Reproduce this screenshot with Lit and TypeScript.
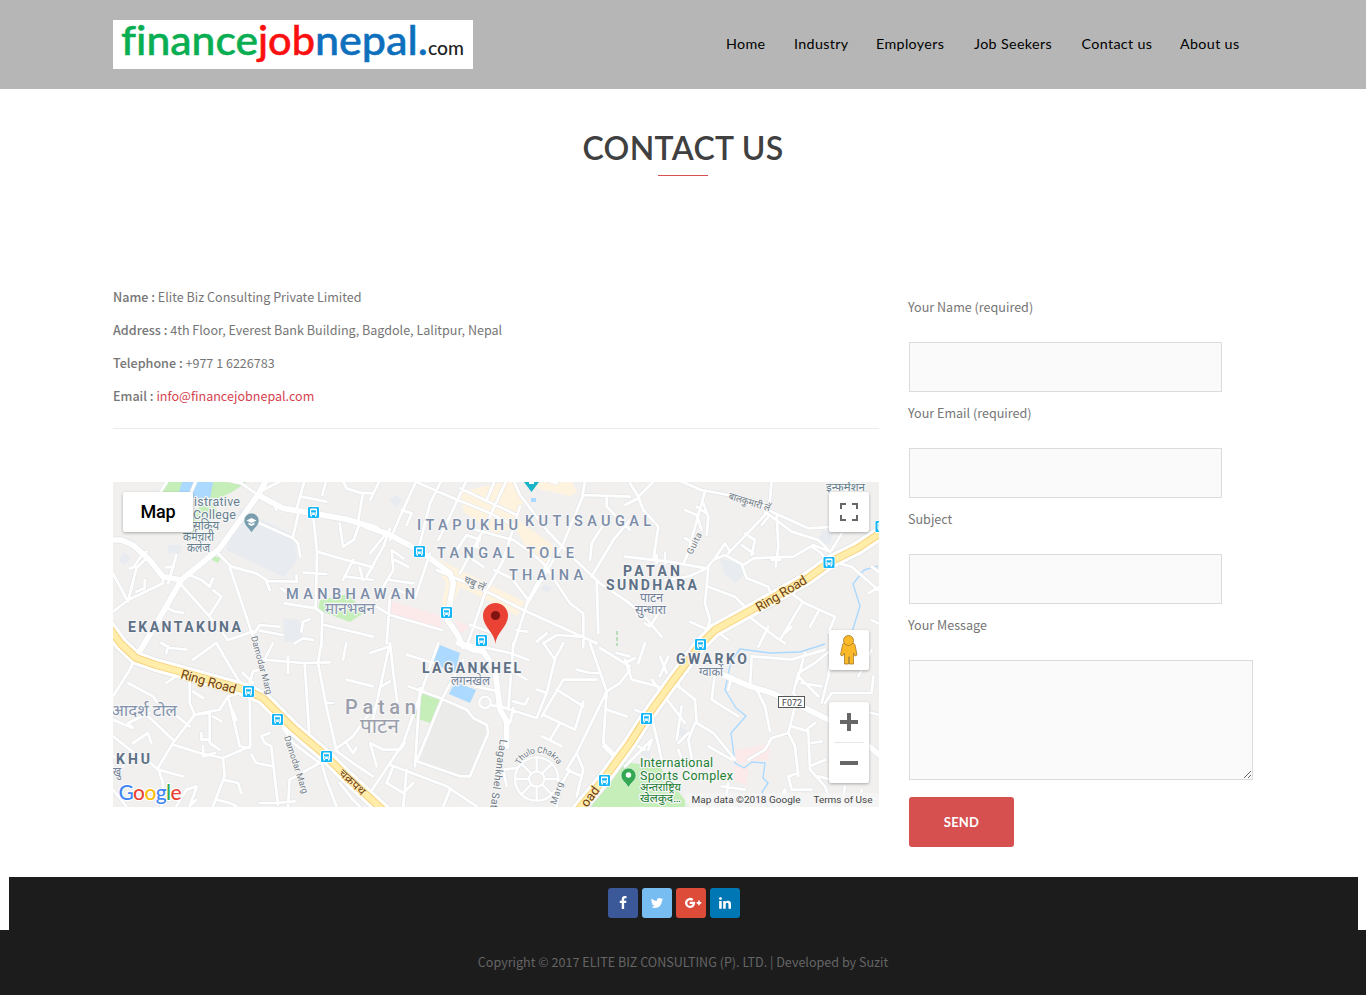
import { LitElement, html, css, svg } from "lit";
import { customElement } from "lit/decorators.js";

interface Tile {
  x: number;
  y: number;
  minor: string;
  mid: string;
}

/* Street geometry, one entry per map tile; tile units are a third of a pixel. */
const TILES: Tile[] = [
  {
    x: 113,
    y: 480,
    mid: "M70 530L125 440L205 300L320 205L435 45L460 0M435 45L510 85L600 100L700 118L790 145M-5 180L25 180L60 195L110 240L150 290L205 300",
    minor:
      "M250 0L235 36M165 0L140 40M435 45L385 10L340 0M450 30L510 0M575 0L550 90M565 50L640 65M640 0L628 45M780 40L740 38L700 25L690 0M750 40L735 125M490 90L485 70M600 105L612 215L608 385L628 400L625 500M612 215L700 240L780 262M720 240L690 300M740 130L722 180L690 200M680 130L690 200M440 130L540 175L555 190L562 230M555 105L540 170M572 278L640 282M550 285L552 305L465 303L430 280L355 260L310 215M350 262L380 350L420 470L430 495M460 303L470 330M205 315L290 410L345 480L420 455M230 285L265 300L290 320L300 295M300 330L325 350L290 405M150 300L150 310L45 360L0 395M0 280L45 365L70 265L95 240M50 265L62 262L80 235L100 215M95 300L95 325L70 335M165 385L185 395L210 398M165 310L180 260L190 225M160 262L182 260M515 370L610 385M505 325L540 350M425 458L440 435L500 440M440 452L510 465M565 455L570 425L590 418M545 490L570 475L600 480M635 435L780 470M700 290L780 300M740 262L750 300",
  },
  {
    x: 370,
    y: 480,
    mid: "M-10 140L50 160L150 212L200 250L240 280L250 310L232 420L260 460L280 500",
    minor:
      "M140 0L90 110L60 180M95 90L125 100L110 135M125 0L240 50L350 95L430 135M215 0L180 70L145 210M290 0L230 130L205 180M350 60L375 0M410 0L350 130L270 280M320 150L430 180L480 215L520 250L600 370L640 400L640 500M270 25L440 105M430 0L450 45L530 150L600 225L690 310L780 370M450 80L400 240L345 340L290 500M530 0L560 10M645 0L638 45L780 50M640 45L580 190L470 375L430 500M710 50L710 80L780 150M780 120L730 180L665 290M660 240L665 190L690 150L720 110M200 270L340 330L460 390L680 490M372 270L425 295L475 360M250 225L290 165L330 180M310 240L340 260M-10 290L40 200L60 145M20 360L40 320L70 270L65 210L100 235M75 240L115 260M180 220L135 355L75 325L60 350L50 490M60 300L130 310M20 380L60 405L215 450M300 435L370 460M520 490L560 465L630 470M500 485L530 460M680 300L685 460M540 235L470 370M0 220L45 165M440 450L470 455M330 170L320 200L340 215M0 60L30 0",
  },
  {
    x: 625,
    y: 480,
    mid: "",
    minor:
      "M230 30L310 45L400 65L440 95L550 145L630 140M160 0L240 35L185 230L175 250M40 50L90 0M40 55L0 75M15 10L40 50L55 90L100 140L85 240M180 90L215 105L230 150M235 70L250 110L245 165M215 80L245 100M180 175L210 190M0 230L130 245L245 265L265 240L300 225L355 255L385 235L505 230L565 195L615 215M440 0L435 60L420 105L310 220M420 95L500 155L580 180L610 210M455 105L460 200L452 260M360 160L390 180L380 225M430 110L410 135M440 240L465 240M620 210L650 160M350 255L365 295L430 320L435 335M250 265L240 370L255 420L240 470M120 300L190 290L245 265M250 320L330 350L360 380M270 235L300 190L315 215M350 195L385 220M560 200L590 220L600 240L680 260L760 330M680 0L650 60M500 340L540 370L630 410L610 460M530 370L465 480M580 395L555 440M360 400L450 470L480 490M290 465L310 480M195 425L250 450M430 440L400 500M95 225L95 250M120 220L120 250M0 360L50 400L110 470M60 430L75 440L100 400M740 260L780 290M480 460L500 440M730 340L780 310M740 420L780 440",
  },
  {
    x: 113,
    y: 643,
    mid: "",
    minor:
      "M70 40L50 80L0 160M45 120L120 160L130 175L180 210L230 250M145 0L170 15L220 20M165 10L160 30M310 0L240 50M310 0L345 60L375 110L400 135M160 120L195 95L230 105L230 180L245 215L180 300L135 375L150 420L145 490M240 145L270 165M245 215L320 200L345 160L400 145M345 160L360 220L380 310L410 315M410 160L412 310L330 345L335 400L300 490M350 185L370 230M245 215L290 210L290 300L320 320M300 220L325 235M265 270L265 290L290 290M0 230L60 255L45 240L110 210M105 220L180 290M60 300L105 270L115 300M0 280L50 320L90 350M35 330L30 370M90 340L135 380L210 400M180 305L260 330L330 345M270 310L270 340L305 330M390 90L420 120M410 120L420 85L440 80L480 0M450 50L570 60L650 58M525 40L525 90M575 60L590 290M625 0L615 60L640 190L670 320M700 0L690 50M700 110L780 130M640 180L660 180M780 195L720 280L665 320L720 360L780 400M700 300L720 330L730 315M470 270L445 280L455 300L475 310L485 400L495 485M415 335L430 360L480 370M510 255L540 300L620 360L530 410L525 490M620 340L640 410L670 490M680 420L720 470L740 490M330 410L375 420L385 450M0 340L30 350M190 490L220 440L250 430M0 440L40 490M310 470L350 480L370 490M440 480L490 480L545 475M250 435L230 490L250 470",
  },
  {
    x: 370,
    y: 643,
    mid: "M265 0L310 20L340 25L375 80L390 200L410 235L410 310",
    minor:
      "M60 0L70 90L85 200M0 270L60 0M0 30L60 10M110 35L190 60M35 130L60 115M115 130L210 165L290 200L310 225L350 245L355 270L300 400L270 400L140 355L220 160L280 50M205 0L100 300L0 450M150 135L135 370M0 300L40 320L90 320L105 300M0 300L20 370M60 365L230 430L320 490M110 380L100 490M70 370L50 420L100 450L130 420M240 440L220 490M280 0L420 30L475 50M430 0L415 200M420 80L470 110M390 190L500 225L530 150L555 50L520 0M430 195L420 240M430 175L465 185L475 165M315 130L385 145L390 190L365 187M555 45L570 20L580 0M515 220L580 110L680 110M560 140L640 190M640 175L615 260L520 215M660 0L710 145L620 330L590 380M710 145L700 300L740 340M690 15L780 70M710 145L750 120L780 80M780 40L740 30M570 240L540 290M515 280L575 310M620 330L640 380L620 460M600 380L570 430L560 490M590 380L635 400M620 80L660 90L690 90M710 200L770 220M500 140L530 150M440 375L400 380L410 430M730 340L700 310",
  },
  {
    x: 625,
    y: 643,
    mid: "M270 85L375 130L440 150L540 195L630 240M720 300L780 350",
    minor:
      "M0 50L20 110L100 130M105 100L130 40M0 60L30 45M60 0L40 60M105 40L125 90M170 190L155 290M165 80L160 130L210 170L215 240L265 270L330 350M210 240L190 290L210 400M190 270L160 300M160 320L190 400M270 90L260 170L340 220M320 100L310 140M375 130L380 40L500 50L600 20M395 140L420 190L435 265M520 90L505 150L540 200M520 90L570 60L620 20M520 100L580 160M530 120L590 130M540 30L515 120M600 180L620 150L740 150L745 100M620 20L610 100L590 180M690 200L740 210L780 220M510 190L490 270L440 285L420 320L370 350M490 270L510 310L520 400M500 250L550 265L555 380L600 430L620 490M555 370L600 350M545 260L570 240M520 390L490 400L500 440L560 440M560 300L590 295M580 400L620 410M80 110L180 240M30 200L80 220L110 350L120 370M0 370L80 290M80 290L70 320M40 310L60 320M160 120L70 230L0 320M250 310L320 350M290 430L360 440M310 420L300 480M660 430L650 490M710 440L700 490M680 460L780 470M740 20L700 100M450 460L450 490L480 440L490 490",
  },
];

const AREAS: [string, string][] = [
  ["#c5eeb9", "M164 482H192L174 500L160 496ZM210 482H247L232 492L205 505ZM185 515L213 500L218 514L195 533L181 530ZM320 600L348 594L365 612L350 622L318 610ZM421 690L441 697L430 723L415 718ZM213 556L221 558L218 563L212 560ZM593 802L625 762L660 767L690 807H590Z"],
  ["#abd9ff", "M182 482H213L210 500L178 496ZM440 645L460 653L455 672L432 664ZM455 682L476 690L470 703L449 694ZM531 498h5v4h-5z"],
  ["#e8ecf0", "M240 508L293 535L298 560L284 577L226 550ZM283 618L300 620L304 642H284ZM719 557L740 565L744 574L736 583L725 575ZM822 530L833 533L830 545L818 541ZM168 545h13v8h-13zM123 552l8 5l-6 8l-6-4ZM395 495l7 5l-5 7l-8-6ZM545 584l8 4l-5 5l-7-4ZM640 745l10 5v9l-8-4ZM680 727l8 4l-4 7l-8-4Z"],
  ["#fce9e9", "M388 600L441 616V629L386 612ZM455 619L470 627L460 634ZM735 750L770 744L768 760L737 763ZM735 765L748 768L747 786L734 780Z"],
  ["#fef3df", "M460 492L505 482H515L524 500L516 527L494 534L464 512ZM528 482H572L577 492L570 496L540 489ZM500 502L523 524L553 545L548 572L525 545ZM430 555L470 575L525 602L517 616L479 596L460 587L449 615H440L446 583Z"],
  ["#ebebea", "M443 700L468 711L489 726L468 777L420 760Z"],
];

const RINGS = [
  "M105 622L121 644L136 658L156 665L196 676L246 690L263 698L276 711L293 728L326 756L346 776L385 812",
  "M574 815L603 780L630 743L646 718L672 682L700 645L715 630L755 608L808 578L830 562L858 548L888 528",
];

const BUSES = [[313.5, 512.5], [419.5, 551.5], [446.5, 612.5], [481.5, 640.5], [829, 562.5], [881, 526.5], [700.5, 644.5], [248.5, 691.5], [277.5, 719.5], [326.5, 756.5], [646.5, 718.5], [604.5, 780.5]];

type Label = [text: string, x: number, y: number, width: number, size: number, kind: string, angle?: number];
const LABELS: Label[] = [
  ["istrative", 194, 505.5, 46, 12.5, "poi"],
  ["College", 193, 518.5, 43, 12.5, "poi"],
  ["सकिय", 193, 530, 26, 12, "poi"],
  ["कर्मचारी", 183, 541, 31, 12, "poi"],
  ["कलेज", 187, 552, 23, 12, "poi"],
  ["ITAPUKHU", 417, 530, 101, 14.5, "hood"],
  ["KUTISAUGAL", 525, 526, 126, 14.5, "hood"],
  ["TANGAL TOLE", 437, 558, 137, 14.5, "hood"],
  ["THAINA", 509, 580, 74, 14.5, "hood"],
  ["MANBHAWAN", 286, 599, 129, 14.5, "hood"],
  ["मानभबन", 325, 614, 50, 16, "hoodn"],
  ["EKANTAKUNA", 128, 632, 113, 14, "town"],
  ["PATAN", 623, 576, 57, 14, "town"],
  ["SUNDHARA", 606, 590, 91, 14, "town"],
  ["पाटन", 640, 602, 23, 12, "towni"],
  ["सुन्धारा", 635, 614, 31, 13, "towni"],
  ["LAGANKHEL", 422, 673, 99, 14, "town"],
  ["लगनखेल", 451, 685, 39, 12, "towni"],
  ["GWARKO", 676, 664, 71, 14, "town"],
  ["ग्वार्को", 699, 676, 24, 12, "towni"],
  ["KHU", 116, 764, 34, 14, "town"],
  ["खु", 113, 776, 8, 13, "towni"],
  ["आदर्श टोल", 111, 716, 66, 16, "hoodn"],
  ["Patan", 345, 714, 71, 20, "city"],
  ["पाटन", 360, 733, 39, 20, "cityn"],
  ["बालकुमारी लॅ", 728, 499, 43, 10, "street", 17],
  ["इन्फर्मेशन", 826, 491, 39, 11, "poi"],
  ["Guita", 692, 555, 23, 9, "street", -64],
  ["चबु लॅ", 463, 582, 22, 10, "street", 24],
  ["Damodar Marg", 251, 637, 60, 9, "street", 75],
  ["Damodar Marg", 284, 737, 60, 9, "street", 72],
  ["Lagankhel Satdobato", 500, 739, 104, 10.5, "street", 98],
  ["Marg", 556, 805, 23, 9, "street", -72],
  ["Ring Road", 180, 678, 57, 13, "ring", 16],
  ["Ring Road", 759, 612, 57, 13, "ring", -31],
  ["चक्रपथ", 338, 774, 32, 11, "ring", 43],
  ["oad", 587, 808, 22, 13, "ring", -53],
  ["International", 640, 766.5, 73, 12.5, "park"],
  ["Sports Complex", 640, 779.5, 93, 12.5, "park"],
  ["अन्तराष्ट्रिय", 640, 791, 41, 11, "park"],
  ["खेलकुद…", 640, 802, 41, 11, "park"],
];

/* Devanagari clusters must scale as a whole; Latin names are letterspaced. */
const adjust = (text: string) => (/[\u0900-\u097f]/.test(text) ? "spacingAndGlyphs" : "spacing");

const label = ([text, x, y, width, size, kind, angle = 0]: Label) => svg`
  <text class=${"lbl " + kind} x=${x} y=${y} font-size=${size} textLength=${width} lengthAdjust=${adjust(text)}
    transform=${`rotate(${angle} ${x} ${y})`}>${text}</text>`;

@customElement("location-map")
export class LocationMap extends LitElement {
  static styles = css`
    :host { display: block; height: 325px; overflow: hidden; }
    .map { display: block; width: 766px; height: 325px; }
    .road { fill: none; stroke-linejoin: round; stroke-linecap: round; }
    .case { stroke: #e1e4e7; }
    .face { stroke: #fff; }
    .river { fill: none; stroke: #abd9ff; stroke-width: 1.4; stroke-linejoin: round; }
    .lbl { font-family: Roboto, "Noto Sans", "Noto Sans Devanagari", sans-serif; paint-order: stroke; stroke: #f6f6f6; stroke-width: 2.4px; stroke-linejoin: round; white-space: pre; }
    .poi { fill: #65818f; }
    .hood { fill: #7b8ca8; font-weight: 500; }
    .hoodn { fill: #8492ac; }
    .town { fill: #5f7186; font-weight: 700; }
    .towni { fill: #73839a; }
    .city { fill: #9b9fab; font-weight: 500; }
    .cityn { fill: #9b9fab; }
    .street { fill: #727c86; stroke-width: 2px; }
    .ring { fill: #713f12; stroke: #ffedb0; stroke-width: 1.5px; }
    .park { fill: #238034; }
    .small { font: 9.5px Roboto, sans-serif; fill: #444; }
    .btn { font: 500 18px Roboto, sans-serif; fill: #000; }
    .brand { font: 500 21px Lato, sans-serif; paint-order: stroke; stroke: #fff; stroke-width: 2px; }
    .shadow { filter: drop-shadow(0 1px 1.5px rgba(0, 0, 0, 0.3)); }
  `;

  private roads(casing: boolean) {
    const extra = casing ? 3.4 : 0;
    return TILES.map(
      (t) => svg`<g transform=${`translate(${t.x} ${t.y}) scale(.33333)`}>
        <path class=${"road " + (casing ? "case" : "face")} stroke-width=${8.2 + extra} d=${t.minor}></path>
        <path class=${"road " + (casing ? "case" : "face")} stroke-width=${17 + extra} d=${t.mid}></path>
        ${t.x === 370 && t.y === 643
          ? svg`<g class=${"road " + (casing ? "case" : "face")} stroke-width=${7 + extra}>
              <circle cx="345" cy="178" r="17"></circle><circle cx="500" cy="408" r="65"></circle><circle cx="500" cy="408" r="23"></circle>
              <path d="M500 385V343M500 431V473M477 408H435M523 408H565M484 392L454 362M516 424L546 454M484 424L454 454M516 392L546 362"></path></g>`
          : ""}
      </g>`
    );
  }

  render() {
    return html`<svg class="map" viewBox="113 482 766 325" role="img" aria-label="Map">
      <rect x="113" y="482" width="766" height="325" fill="#f1f0ef"></rect>
      ${AREAS.map(([c, d]) => svg`<path fill=${c} d=${d}></path>`)}
      <path class="river" d="M878 566L864 570L853 584L860 606L852 632L850 640M825 644L800 652L770 653L740 649L731 661L725 690L736 708L746 716L731 733L735 763L744 768L752 762L765 763L763 778L768 783L762 792L768 807"></path>
      ${this.roads(true)}
      ${RINGS.map((d) => svg`<path class="road case" stroke-width="15.5" d=${d}></path>`)}
      ${this.roads(false)}
      ${RINGS.map((d) => svg`
        <path class="road" stroke="#fff" stroke-width="14" d=${d}></path>
        <path class="road" stroke="#f6d27f" stroke-width="8" d=${d}></path>
        <path class="road" stroke="#ffeda9" stroke-width="6" d=${d}></path>`)}
      <path d="M617 631V646" stroke="#83cc83" stroke-width="1" stroke-dasharray="4 2"></path>
      ${LABELS.map(label)}
      <defs><path id="arc" d="M520 765A20.5 20.5 0 0 1 559 770"></path></defs>
      <text class="lbl street" font-size="8.5" textLength="47"><textPath href="#arc" textLength="47">Thulo Chakra</textPath></text>
      ${BUSES.map(([x, y]) => svg`<g transform=${`translate(${x} ${y})`}>
        <rect x="-6.2" y="-6.2" width="12.4" height="12.4" rx="1.5" fill="#fff"></rect>
        <rect x="-5.5" y="-5.5" width="11" height="11" rx="1" fill="#14b6f8"></rect>
        <path fill="#fff" d="M-3.5-3Q-3.5-4-2.5-4H2.5Q3.5-4 3.5-3V2.5H3V4H1.5V2.5H-1.5V4H-3V2.5H-3.5Z"></path>
        <path fill="#14b6f8" d="M-2.4-2.3H2.4V-.1H-2.4ZM-2.4 .9h1.3v1h-1.3zM1.1 .9h1.3v1H1.1z"></path></g>`)}
      <path fill="#7b9eae" stroke="#fff" stroke-width=".6" d="M251.5 533C249 528 244 526 244 520.500A7.500 7.500 0 0 1 259 520.500C259 526 254 528 251.500 533Z"></path>
      <path fill="#fff" d="M246.500 520.500L251.500 518L256.500 520.500L251.500 523ZM248.500 522.500L251.500 524L254.500 522.500V524.500L251.500 526L248.500 524.500Z"></path>
      <path fill="#18b5c9" d="M524 482H539L531.500 492Z"></path><path fill="#fff" d="M529 482h5v2h-5z"></path>
      <path fill="#34a853" stroke="#fff" stroke-width=".6" d="M628.500 788C626 782 621 781 621 775.500A7.500 7.500 0 0 1 636 775.500C636 781 631 782 628.500 788Z"></path>
      <circle cx="628.500" cy="775" r="2.700" fill="#fff"></circle>
      <path fill="#ea4335" d="M495.500 644C494.500 632 483 627 483 615.500A12.500 12.500 0 0 1 508 615.500C508 627 496.500 632 495.500 644Z"></path>
      <circle cx="495.500" cy="615.500" r="4.600" fill="#811411"></circle>
      <rect x="778.500" y="696.500" width="26" height="11" fill="#fff" stroke="#555"></rect>
      <text class="small" x="782" y="705.500" textLength="20" lengthAdjust="spacingAndGlyphs">F072</text>
      <rect x="685" y="793" width="194" height="14" fill="#f5f5f5" fill-opacity=".75"></rect>
      <text class="small" x="691.500" y="803" textLength="109" lengthAdjust="spacingAndGlyphs">Map data ©2018 Google</text>
      <text class="small" x="813.500" y="803" textLength="59" lengthAdjust="spacingAndGlyphs">Terms of Use</text>
      <text class="brand" x="118.500" y="800" textLength="63"><tspan fill="#4285f4">G</tspan><tspan fill="#ea4335">o</tspan><tspan fill="#fbbc05">o</tspan><tspan fill="#4285f4">g</tspan><tspan fill="#34a853">l</tspan><tspan fill="#ea4335">e</tspan></text>
      <g class="shadow" fill="#fff">
        <rect x="123" y="492" width="70" height="40" rx="2"></rect>
        <rect x="829" y="492" width="40" height="40" rx="2"></rect>
        <rect x="829" y="630" width="40" height="40" rx="2"></rect>
        <rect x="829" y="702" width="40" height="81" rx="2"></rect>
      </g>
      <text class="btn" x="140.500" y="518" textLength="35">Map</text>
      <path fill="none" stroke="#666" stroke-width="2" d="M841 509V504H846M852 504H857V509M857 515V520H852M846 520H841V515"></path>
      <path fill="none" stroke="#666" stroke-width="4" d="M840 722H858M849 713V731M840 763H858"></path>
      <path stroke="#e6e6e6" d="M834 742.500H864"></path>
      <g fill="#fbb829" stroke="#a47a26" stroke-width=".8">
        <path d="M842.500 645Q842.500 643 845 643H852Q854.500 643 855 645L857 655L855 656L853.500 653V664H849.500V657H848.500V664H844.500V653L842.500 656L840.500 655Z"></path>
        <circle cx="848.500" cy="640.500" r="5"></circle>
      </g>
    </svg>`;
  }
}

const FIELDS = ["Your Name (required)", "Your Email (required)", "Subject"];
const NAV = ["Home", "Industry", "Employers", "Job Seekers", "Contact us", "About us"];

const SOCIAL = [
  { name: "fb", d: "M1343 12v264h-157q-86 0-116 36t-30 108v189h293l-39 296h-254v759h-306v-759h-255v-296h255v-218q0-186 104-288.5t277-102.5q147 0 228 12z" },
  { name: "tw", d: "M1684 408q-67 98-162 167 1 14 1 42 0 130-38 259.5t-115.5 248.5-184.5 210.5-258 146-323 54.5q-271 0-496-145 35 4 78 4 225 0 401-138-105-2-188-64.5t-114-159.5q33 5 61 5 43 0 85-11-112-23-185.5-111.5t-73.5-205.5v-4q68 38 146 41-66-44-105-115t-39-154q0-88 44-163 121 149 294.5 238.5t371.5 99.5q-8-38-8-74 0-134 94.5-228.5t228.5-94.5q140 0 236 102 109-21 205-78-37 115-142 178 93-10 186-50z" },
  { name: "gp", d: "M720 740V1030H1100Q1040 1260 790 1260A364 364 0 1 1 1010 606L1210 400A650 650 0 1 0 1430 890Q1430 810 1420 740ZM1810 590V780H1620V1000H1810V1190H2020V1000H2210V780H2020V590Z" },
  { name: "in", d: "M477 625v991h-330v-991h330zm21-306q1 73-50.5 122t-135.500 49h-2q-82 0-132-49t-50-122q0-74 51.500-122.500t134.500-48.500 133 48.500 51 122.500zm1166 729v568h-329v-530q0-105-40.500-164.500t-126.500-59.500q-63 0-105.500 34.500t-63.500 85.500q-11 30-11 81v553h-329q2-399 2-647t-1-296l-1-48h329v144h-2q20-32 41-56t56.500-52 87-43.500 114.500-15.500q171 0 275 113.500t104 332.500z" },
];

@customElement("app-root")
export class AppRoot extends LitElement {
  static styles = css`
    :host { display: block; height: 995px; background: #fff; color: #767676; font: 12.57px/24px "Noto Sans CJK SC", sans-serif; }
    * { box-sizing: border-box; }
    .header { height: 89px; background: #b6b6b6; padding: 20px 113px; display: flex; justify-content: space-between; }
    .logo { display: block; width: 360px; height: 49px; background: #fff; overflow: visible; }
    .logo text { font-family: Lato, sans-serif; font-size: 40px; font-weight: 500; font-variant-ligatures: none; stroke-width: 0.5px; }
    .logo .tld { font-size: 20px; }
    .green { fill: #0aae52; stroke: #0aae52; }
    .red { fill: #fb0f0f; stroke: #fb0f0f; }
    .blue { fill: #0e70bd; stroke: #0e70bd; }
    .tld { fill: #222; }
    .nav { display: grid; grid-template-columns: 68px 82px 98px 107.500px 98.500px 73px; font: 14.3px/48px Lato, sans-serif; letter-spacing: 0.35px; color: #000; white-space: nowrap; }
    .title { margin: 0; padding-top: 40px; text-align: center; font: 600 32px/38px Lato, sans-serif; letter-spacing: 0.35px; color: #404040; }
    .rule { width: 50px; height: 1px; margin: 8px auto 0; background: #d65050; }
    .main { display: grid; grid-template-columns: 766px 344px; gap: 30px; padding: 109px 113px 0; height: 701px; }
    .line { margin: 0 0 9px; white-space: nowrap; }
    .line b { font-weight: 500; }
    .mail { color: #d63f50; }
    .sep { height: 1px; background: #ebebeb; margin: 20px 0 53px; }
    .form { padding-top: 10px; }
    .label { display: block; margin-left: -1px; height: 24px; margin-bottom: 23px; }
    .input, .area { display: block; border: 1px solid #dbdbdb; background: #fafafa; border-radius: 0; outline: 0; padding: 10px; margin: 0 0 9px; }
    .input { width: 313px; height: 50px; }
    .area { width: 344px; height: 120px; margin-bottom: 17px; resize: both; }
    .send { display: block; width: 105px; height: 50px; border: 0; border-radius: 3px; background: #d65050; color: #fff; font: 700 13px/50px Lato, sans-serif; letter-spacing: 0.2px; padding: 0; }
    .social { height: 53px; margin: 0 8px 0 9px; background: #1c1c1c; display: flex; justify-content: center; gap: 4px; padding: 11px 19px 0 0; }
    .icon { width: 30px; height: 30px; border-radius: 3px; display: flex; align-items: center; justify-content: center; }
    .icon svg { width: 14px; height: 14px; fill: #fff; overflow: visible; }
    .fb { background: #3b5998; }
    .tw { background: #78bdf1; }
    .gp { background: #dd4b39; }
    .in { background: #0077b5; }
    .footer { height: 65px; background: #1c1c1c; text-align: center; line-height: 63px; color: #656565; }
  `;

  render() {
    return html`
      <header class="header">
        <svg class="logo" viewBox="113 20 360 49">
          <text class="green" x="121" y="55" textLength="137" lengthAdjust="spacingAndGlyphs">finance</text>
          <text class="red" x="258" y="55" textLength="57" lengthAdjust="spacingAndGlyphs">job</text>
          <text class="blue" x="315" y="55" textLength="113" lengthAdjust="spacingAndGlyphs">nepal.</text>
          <text class="tld" x="428" y="55" textLength="36" lengthAdjust="spacingAndGlyphs">com</text>
        </svg>
        <nav class="nav">${NAV.map((n) => html`<span>${n}</span>`)}</nav>
      </header>
      <h1 class="title">CONTACT US</h1>
      <div class="rule"></div>
      <main class="main">
        <section>
          <p class="line"><b>Name :</b> Elite Biz Consulting Private Limited</p>
          <p class="line"><b>Address :</b> 4th Floor, Everest Bank Building, Bagdole, Lalitpur, Nepal</p>
          <p class="line"><b>Telephone :</b> +977 1 6226783</p>
          <p class="line"><b>Email :</b> <span class="mail">info@financejobnepal.com</span></p>
          <div class="sep"></div>
          <location-map></location-map>
        </section>
        <form class="form">
          ${FIELDS.map((f) => html`<label class="label">${f}</label><input class="input" />`)}
          <label class="label">Your Message</label><textarea class="area"></textarea>
          <button class="send" type="button">SEND</button>
        </form>
      </main>
      <div class="social">
        ${SOCIAL.map((s) => html`<span class="icon ${s.name}"><svg viewBox="0 0 1792 1792"><path d=${s.d}></path></svg></span>`)}
      </div>
      <footer class="footer">Copyright © 2017 ELITE BIZ CONSULTING (P). LTD. | Developed by Suzit</footer>
    `;
  }
}
